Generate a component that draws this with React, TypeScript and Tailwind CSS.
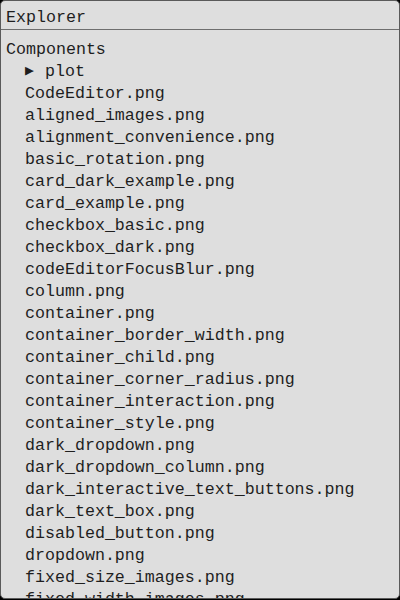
import React from 'react';

const files = [
  'CodeEditor.png',
  'aligned_images.png',
  'alignment_convenience.png',
  'basic_rotation.png',
  'card_dark_example.png',
  'card_example.png',
  'checkbox_basic.png',
  'checkbox_dark.png',
  'codeEditorFocusBlur.png',
  'column.png',
  'container.png',
  'container_border_width.png',
  'container_child.png',
  'container_corner_radius.png',
  'container_interaction.png',
  'container_style.png',
  'dark_dropdown.png',
  'dark_dropdown_column.png',
  'dark_interactive_text_buttons.png',
  'dark_text_box.png',
  'disabled_button.png',
  'dropdown.png',
  'fixed_size_images.png',
  'fixed_width_images.png',
];

const App: React.FC = () => {
  return (
    <div className="w-[400px] h-[600px] bg-black">
      <div
        className="w-full h-[599px] bg-[#dedede] border border-[#5a5a5a] rounded-[5px] overflow-hidden flex flex-col text-[#1e1e1e] text-[16.65px] leading-[22px]"
        style={{ fontFamily: '"Liberation Mono", monospace' }}
      >
        {/* Header */}
        <div className="h-[29px] shrink-0 border-b border-[#6e6e6e] px-[5px] pt-[6px]">Explorer</div>

        {/* Tree */}
        <div className="flex-1 overflow-hidden px-[5px] pt-[9px] whitespace-pre">
          <div>Components</div>
          <div className="pl-[19px] flex items-center">
            <span className="text-[15px] w-[20px]">▶</span>
            <span>plot</span>
          </div>
          {files.map((f) => (
            <div key={f} className="pl-[19px]">{f}</div>
          ))}
        </div>
      </div>
    </div>
  );
};

export default App;
